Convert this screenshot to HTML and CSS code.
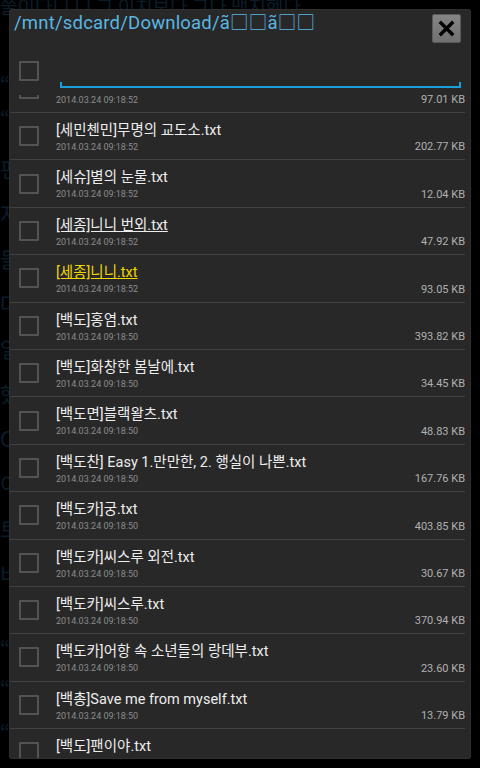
FILE: index.html
```html
<!DOCTYPE html>
<html>
	<head>
		<meta charset="UTF-8">
		<title>파일 선택</title>
		<link rel="stylesheet" href="styles.css">
	</head>
	<body>
		<div id="reader">
			<p class="line top">쭐이다니 니 그 이치보다 그다 맥지헨다</p>
			<p class="line q1">“아니, 그건 아니야.”</p>
			<p class="line q2">“그럼 뭔데?”</p>
			<p class="line l1">편지를 다시 읽었다.</p>
			<p class="line">저 멀리서 들려오는</p>
			<p class="line">들뜬 목소리가</p>
			<p class="line">다시 한번 울렸다.</p>
			<p class="line">일어나야 했다.</p>
			<p class="line">했던 말을 되뇌었다.</p>
			<p class="line">Cㅣ 이야기는</p>
			<p class="line">이제 끝이다.</p>
			<p class="line">토요일 오후였다.</p>
			<p class="line">비가 내렸다.</p>
			<p class="line q3">“괜찮아.”</p>
			<p class="line q4">“정말?”</p>
			<p class="line q4">“응.”</p>
			<p class="line q4">“그래.”</p>
		</div>

		<div id="picker">
			<div class="picker-head">
				<span class="path">/mnt/sdcard/Download/ã□□ã□□</span>
				<button class="close-btn" type="button">
					<svg width="17" height="17" viewBox="0 0 17 17">
						<path d="M3 3 L14 14 M14 3 L3 14" stroke="#000" stroke-width="3.4" stroke-linecap="square" fill="none"/>
					</svg>
				</button>
			</div>
			<div class="select-row">
				<span class="check"></span>
				<div class="filter"></div>
			</div>
			<div class="files">
				<ul class="file-list">
					<li class="first"><span class="check"></span><div class="info"><span class="name">[세종]니니 외전.txt</span><span class="date">2014.03.24 09:18:52</span></div><span class="size">97.01 KB</span></li>
					<li><span class="check"></span><div class="info"><span class="name">[세민첸민]무명의 교도소.txt</span><span class="date">2014.03.24 09:18:52</span></div><span class="size">202.77 KB</span></li>
					<li><span class="check"></span><div class="info"><span class="name">[세슈]별의 눈물.txt</span><span class="date">2014.03.24 09:18:52</span></div><span class="size">12.04 KB</span></li>
					<li><span class="check"></span><div class="info"><span class="name read">[세종]니니 번외.txt</span><span class="date">2014.03.24 09:18:52</span></div><span class="size">47.92 KB</span></li>
					<li><span class="check"></span><div class="info"><span class="name current">[세종]니니.txt</span><span class="date">2014.03.24 09:18:52</span></div><span class="size">93.05 KB</span></li>
					<li><span class="check"></span><div class="info"><span class="name">[백도]홍염.txt</span><span class="date">2014.03.24 09:18:50</span></div><span class="size">393.82 KB</span></li>
					<li><span class="check"></span><div class="info"><span class="name">[백도]화창한 봄날에.txt</span><span class="date">2014.03.24 09:18:50</span></div><span class="size">34.45 KB</span></li>
					<li><span class="check"></span><div class="info"><span class="name">[백도면]블랙왈츠.txt</span><span class="date">2014.03.24 09:18:50</span></div><span class="size">48.83 KB</span></li>
					<li><span class="check"></span><div class="info"><span class="name">[백도찬] Easy 1.만만한, 2. 행실이 나쁜.txt</span><span class="date">2014.03.24 09:18:50</span></div><span class="size">167.76 KB</span></li>
					<li><span class="check"></span><div class="info"><span class="name">[백도카]궁.txt</span><span class="date">2014.03.24 09:18:50</span></div><span class="size">403.85 KB</span></li>
					<li><span class="check"></span><div class="info"><span class="name">[백도카]씨스루 외전.txt</span><span class="date">2014.03.24 09:18:50</span></div><span class="size">30.67 KB</span></li>
					<li><span class="check"></span><div class="info"><span class="name">[백도카]씨스루.txt</span><span class="date">2014.03.24 09:18:50</span></div><span class="size">370.94 KB</span></li>
					<li><span class="check"></span><div class="info"><span class="name">[백도카]어항 속 소년들의 랑데부.txt</span><span class="date">2014.03.24 09:18:50</span></div><span class="size">23.60 KB</span></li>
					<li><span class="check"></span><div class="info"><span class="name">[백총]Save me from myself.txt</span><span class="date">2014.03.24 09:18:50</span></div><span class="size">13.79 KB</span></li>
					<li><span class="check"></span><div class="info"><span class="name">[백도]팬이야.txt</span><span class="date">2014.03.24 09:18:50</span></div><span class="size">11.02 KB</span></li>
				</ul>
			</div>
		</div>
	</body>
</html>
```

FILE: styles.css
```css
html,
body {
	margin: 0;
	padding: 0;
	height: 100%;
}
body {
	background: #000;
	font-family: Roboto, "Noto Sans CJK KR", sans-serif;
	overflow: hidden;
	position: relative;
}
ul {
	margin: 0;
	padding: 0;
	list-style: none;
}

/* book text behind the dialog */
#reader {
	color: #0a1d2b;
	font-size: 21px;
	font-family: "Noto Sans CJK KR", sans-serif;
}
#reader .line {
	margin: 0;
	height: 45px;
	line-height: 45px;
	white-space: nowrap;
}
#reader .top {
	height: 20px;
	line-height: 20px;
	margin-top: -4px;
	font-size: 19px;
}
#reader .q1 {
	margin-top: 46px;
	height: 34px;
}
#reader .q2 {
	height: 50px;
}
#reader .q3 {
	margin-top: 30px;
	height: 40px;
}
#reader .q4 {
	height: 44px;
}

/* dialog */
#picker {
	position: absolute;
	left: 10px;
	top: 10px;
	width: 460px;
	height: 748px;
	background: #282828;
	border-radius: 2px;
	box-shadow: 0 0 0 1px #303030;
	display: flex;
	flex-direction: column;
	overflow: hidden;
}
.picker-head {
	height: 40px;
	display: flex;
	justify-content: space-between;
	align-items: flex-start;
	padding: 0 9px 0 4px;
}
.path {
	color: #5ab6e2;
	font-size: 18.5px;
	line-height: 22px;
	padding-top: 2px;
	letter-spacing: 0.2px;
}
.close-btn {
	margin-top: 4px;
	width: 29px;
	height: 29px;
	padding: 0;
	border: 1px solid #5a5a5a;
	border-radius: 2px;
	background: linear-gradient(#858585, #707070);
	display: flex;
	align-items: center;
	justify-content: center;
}
.close-btn svg {
	display: block;
}

.check {
	display: block;
	flex: none;
	width: 20px;
	height: 20px;
	box-sizing: border-box;
	border: 2px solid #535353;
	border-radius: 1px;
}

.select-row {
	height: 45px;
	display: flex;
	align-items: flex-start;
	padding: 0 9px;
}
.select-row .check {
	margin-top: 11px;
}
.filter {
	flex: 1;
	margin-left: 21px;
	margin-top: 32px;
	height: 4px;
	border: 2px solid #1c9fd8;
	border-top: none;
}

.files {
	flex: 1;
	overflow: hidden;
}
.file-list {
	margin-right: 5px;
}
.file-list li {
	height: 46.4px;
	border-bottom: 1px solid #414141;
	display: flex;
	align-items: center;
	padding-left: 9px;
}
.file-list li.first {
	margin-top: -29.4px;
}
.info {
	flex: 1;
	min-width: 0;
	margin-left: 17px;
	align-self: flex-start;
	padding-top: 8px;
	display: flex;
	flex-direction: column;
}
.name {
	color: #ededed;
	font-size: 14.5px;
	line-height: 20px;
	white-space: nowrap;
}
.name.read {
	text-decoration: underline;
}
.name.current {
	color: #f2d400;
	text-decoration: underline;
}
.date {
	color: #8c8c8c;
	font-size: 9px;
	line-height: 12px;
}
.size {
	align-self: flex-end;
	margin-bottom: 6px;
	color: #b0b0b0;
	font-size: 11px;
	line-height: 13px;
	white-space: nowrap;
}
```
